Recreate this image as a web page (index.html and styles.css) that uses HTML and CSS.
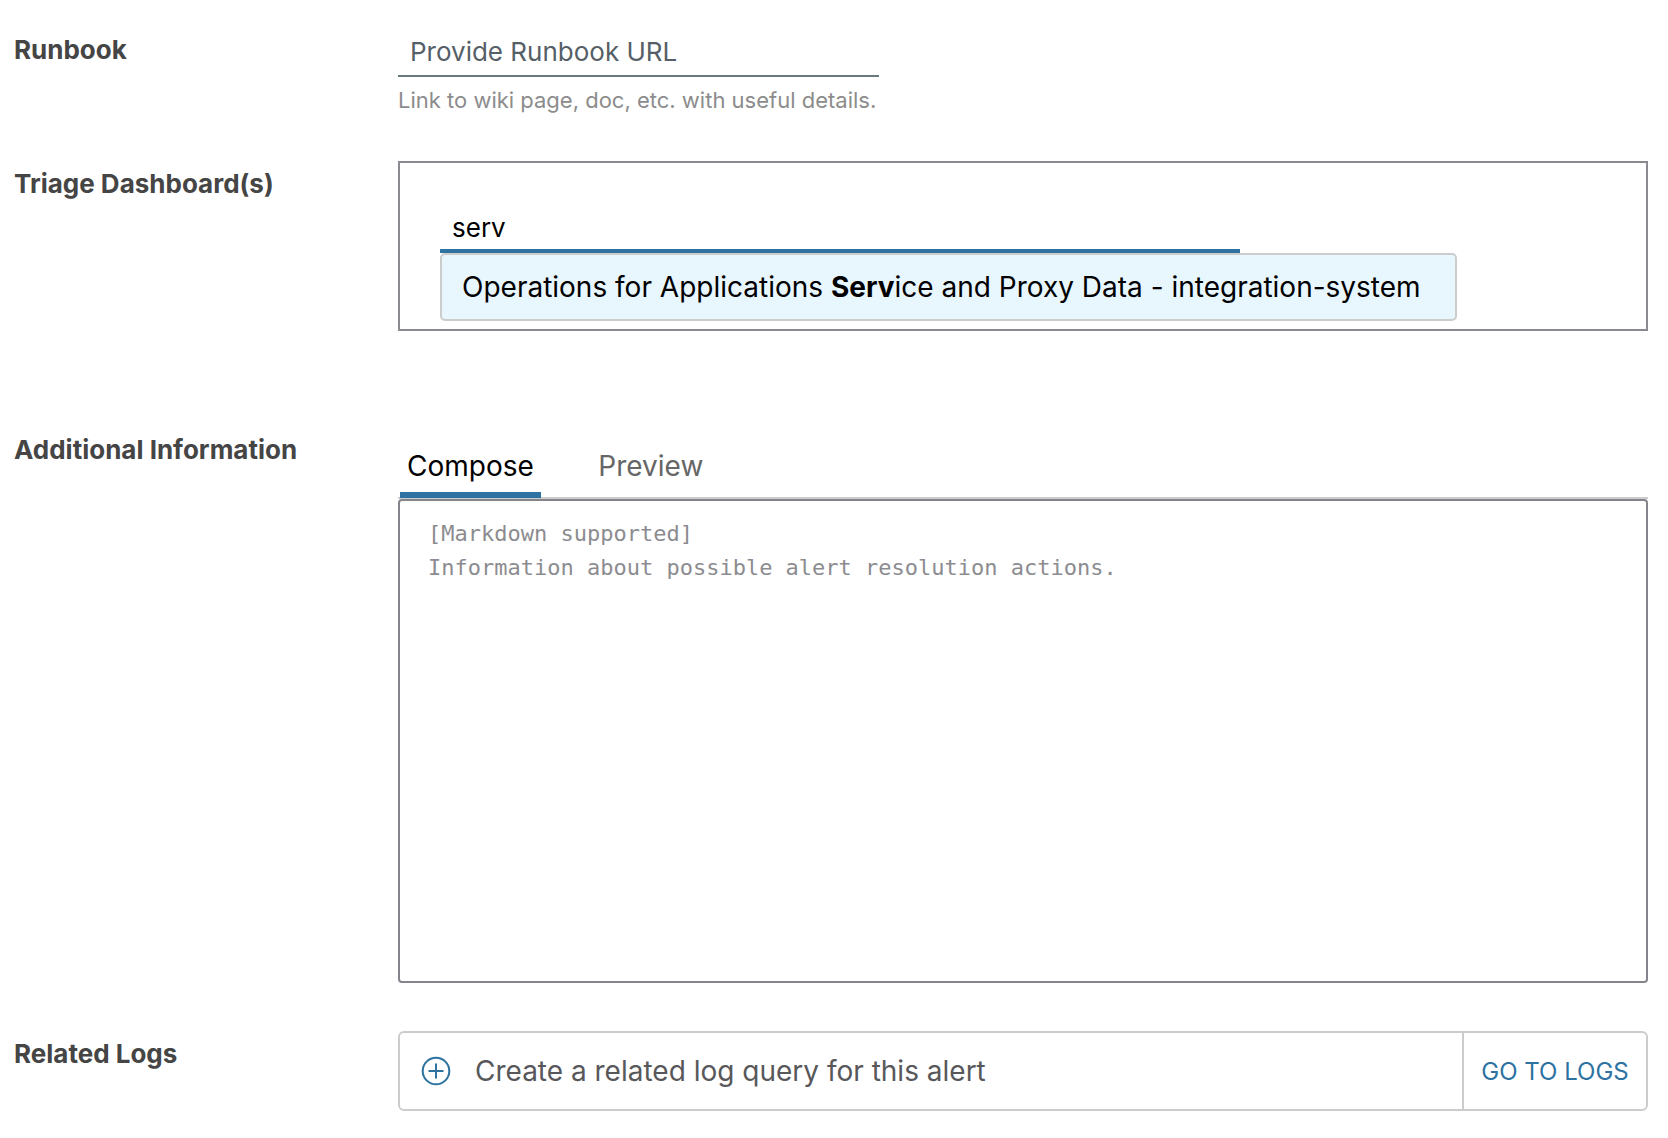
FILE: index.html
```html
<!DOCTYPE html>
<html lang="en">
<head>
  <meta charset="utf-8">
  <meta name="viewport" content="width=device-width, initial-scale=1">
  <title>Alert details</title>
  <link rel="stylesheet" href="styles.css">
</head>
<body>
  <form class="alert-form">
    <div class="row">
      <label class="row-label" for="runbook">Runbook</label>
      <div class="runbook">
        <input class="text-input runbook-input" id="runbook" type="url" placeholder="Provide Runbook URL" aria-describedby="runbook-hint">
        <p class="hint" id="runbook-hint">Link to wiki page, doc, etc. with useful details.</p>
      </div>
    </div>

    <div class="row row-dashboards">
      <label class="row-label" for="dashboards">Triage Dashboard(s)</label>
      <div class="dashboards">
        <div class="combobox">
          <input class="text-input combobox-input" id="dashboards" type="text" value="serv" role="combobox" aria-expanded="true" aria-controls="dashboard-options" autocomplete="off">
          <ul class="options" id="dashboard-options" role="listbox">
            <li class="option" role="option" aria-selected="true">Operations for Applications <b>Serv</b>ice and Proxy Data - integration-system</li>
          </ul>
        </div>
      </div>
    </div>

    <div class="row">
      <label class="row-label" for="info">Additional Information</label>
      <div class="editor">
        <div class="tabs" role="tablist">
          <button class="tab tab-active" type="button" role="tab" aria-selected="true">Compose</button>
          <button class="tab" type="button" role="tab" aria-selected="false">Preview</button>
        </div>
        <textarea class="editor-text" id="info" placeholder="[Markdown supported]&#10;Information about possible alert resolution actions."></textarea>
      </div>
    </div>

    <div class="row">
      <span class="row-label">Related Logs</span>
      <div class="logs">
        <button class="logs-create" type="button">
          <svg class="icon" viewBox="0 0 30 30" aria-hidden="true">
            <circle cx="15" cy="15" r="13.3"/>
            <path d="M15 7.5v15M7.5 15h15"/>
          </svg>
          Create a related log query for this alert
        </button>
        <a class="logs-link" href="#logs">GO TO LOGS</a>
      </div>
    </div>
  </form>
</body>
</html>
```
FILE: styles.css
```css
* {
  box-sizing: border-box;
}

body {
  margin: 0;
  background: #fff;
  color: #000;
  font-family: Inter, "Liberation Sans", sans-serif;
  font-size: 28px;
}

input,
textarea,
button {
  margin: 0;
  border: 0;
  background: none;
  color: inherit;
  font: inherit;
}

.alert-form {
  display: flex;
  flex-direction: column;
  gap: 48px;
  padding: 27px 20px 27px 14px;
}

.row {
  display: grid;
  grid-template-columns: 384px minmax(0, 1fr);
  align-items: start;
}

.row-dashboards {
  min-height: 218px;
}

.row-label {
  padding-top: 8px;
  color: #454545;
  font-size: 26px;
  font-weight: 650;
  line-height: 30px;
}

.text-input {
  display: block;
  width: 100%;
  height: 50px;
  padding: 0 12px;
  font-size: 26px;
  outline: none;
}

.runbook {
  max-width: 481px;
}

.runbook-input {
  border-bottom: 2px solid #6a7880;
}

.runbook-input::placeholder {
  color: #565f67;
  opacity: 1;
}

.hint {
  margin: 10px 0 0;
  color: #8c8c8c;
  font-size: 22px;
  line-height: 26px;
  white-space: nowrap;
}

.dashboards {
  height: 170px;
  padding: 40px;
  border: 2px solid #8c8990;
}

.combobox {
  position: relative;
  max-width: 800px;
}

.combobox-input {
  padding-top: 2px;
  border-bottom: 4px solid #2d72a0;
}

.options {
  position: absolute;
  top: 100%;
  left: 0;
  min-width: 1017px;
  margin: 0;
  padding: 0;
  overflow: hidden;
  border: 2px solid #ccc;
  border-radius: 5px;
  background: #e8f6fe;
  list-style: none;
}

.option {
  padding: 16px 20px;
  line-height: 32px;
  white-space: nowrap;
}

.editor {
  display: flex;
  flex-direction: column;
}

.tabs {
  display: flex;
  gap: 50px;
  height: 72px;
  padding: 0 2px;
  border-bottom: 2px solid #ccc;
}

.tab {
  min-width: 120px;
  height: 71px;
  padding: 12px 7px 0;
  border-bottom: 6px solid transparent;
  color: #666;
}

.tab-active {
  min-width: 140px;
  border-color: #2d72a0;
  color: #000;
}

.editor-text {
  display: block;
  width: 100%;
  height: 484px;
  padding: 16px 28px;
  border: 2px solid #85848c;
  border-radius: 4px;
  font-family: "DejaVu Sans Mono", monospace;
  font-size: 22px;
  line-height: 34px;
  resize: none;
}

.editor-text::placeholder {
  color: #8c8c90;
  opacity: 1;
}

.logs {
  display: flex;
  height: 80px;
  border: 2px solid #ccc;
  border-radius: 6px;
}

.logs-create {
  display: flex;
  flex: 1;
  align-items: center;
  gap: 24px;
  padding: 0 21px;
  color: #58585b;
}

.icon {
  width: 30px;
  height: 30px;
  fill: none;
  stroke: #2d72a0;
  stroke-width: 2;
}

.logs-link {
  display: flex;
  align-items: center;
  justify-content: center;
  min-width: 184px;
  border-left: 2px solid #ccc;
  color: #2d72a0;
  font-size: 24px;
  text-decoration: none;
}
```
